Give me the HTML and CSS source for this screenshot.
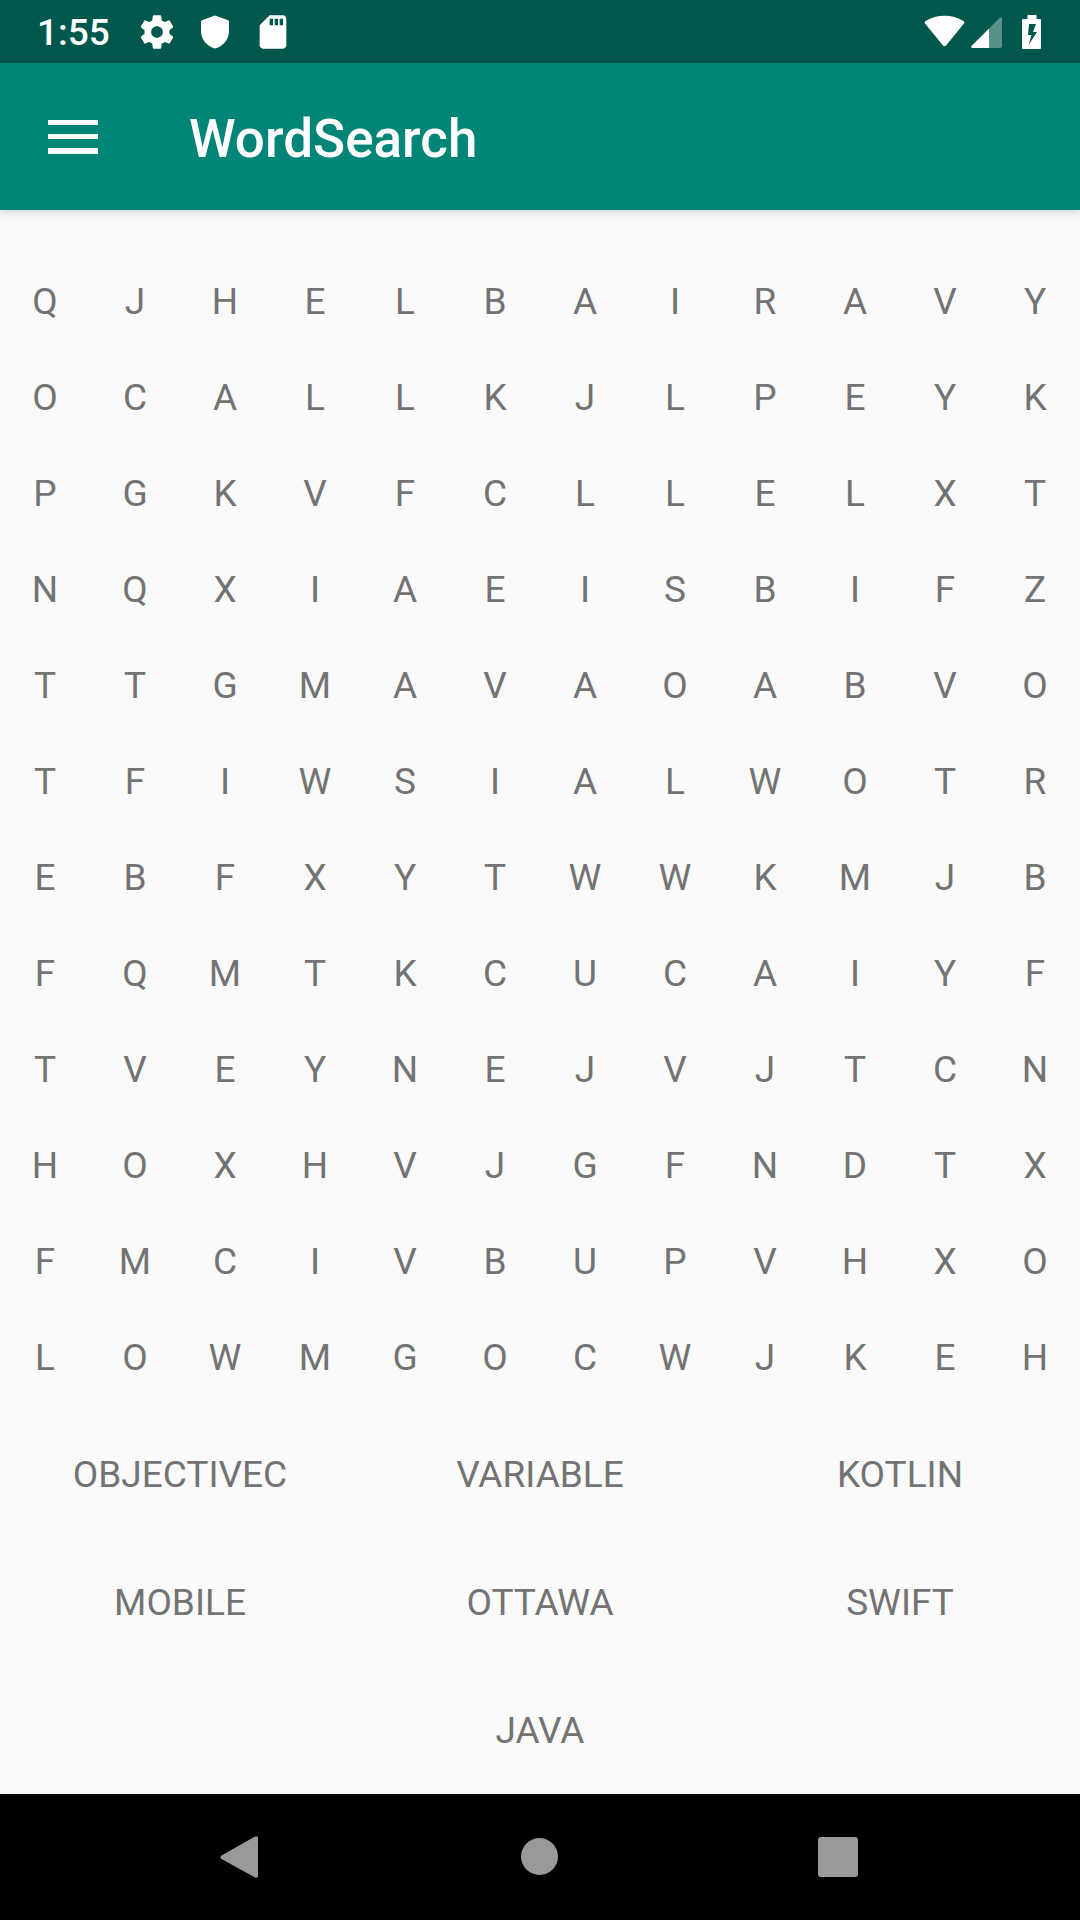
FILE: index.html
```html
<!DOCTYPE html>
<html lang="en">
<head>
<meta charset="utf-8">
<meta name="viewport" content="width=device-width, initial-scale=1">
<title>WordSearch</title>
<link rel="stylesheet" href="styles.css">
</head>
<body>
<div class="status-bar">
  <span class="clock">1:55</span>
  <div class="notifications">
    <svg class="status-icon" viewBox="0 0 24 24" aria-hidden="true"><path fill-rule="evenodd" d="M19.43 12.98c.04-.32.07-.64.07-.98s-.03-.66-.07-.98l2.11-1.65c.19-.15.24-.42.12-.64l-2-3.46c-.12-.22-.39-.3-.61-.22l-2.49 1c-.52-.4-1.08-.73-1.69-.98l-.38-2.65C14.46 2.18 14.25 2 14 2h-4c-.25 0-.46.18-.49.42l-.38 2.65c-.61.25-1.17.59-1.69.98l-2.49-1c-.23-.09-.49 0-.61.22l-2 3.46c-.13.22-.07.49.12.64l2.11 1.65c-.04.32-.07.65-.07.98s.03.66.07.98l-2.11 1.65c-.19.15-.24.42-.12.64l2 3.46c.12.22.39.3.61.22l2.49-1c.52.4 1.08.73 1.69.98l.38 2.65c.03.24.24.42.49.42h4c.25 0 .46-.18.49-.42l.38-2.65c.61-.25 1.17-.59 1.69-.98l2.49 1c.23.09.49 0 .61-.22l2-3.46c.12-.22.07-.49-.12-.64l-2.11-1.65zM12 15.5c-1.93 0-3.5-1.57-3.5-3.5s1.57-3.5 3.5-3.5 3.5 1.57 3.5 3.5-1.57 3.5-3.5 3.5z"/></svg>
    <svg class="status-icon" viewBox="0 0 40 40" aria-hidden="true"><path d="M20 3.5 32.5 8Q34 8.600 34 10V19C34 27.500 28.500 34 20 36.500 11.500 34 6 27.500 6 19V10Q6 8.600 7.500 8Z"/></svg>
    <svg class="status-icon" viewBox="0 0 24 24" aria-hidden="true"><path fill-rule="evenodd" d="M18 2h-8L4.020 8 4 20c0 1.100.9 2 2 2h12c1.100 0 2-.9 2-2V4c0-1.100-.9-2-2-2zm-6 6h-2V4h2v4zm3 0h-2V4h2v4zm3 0h-2V4h2v4z"/></svg>
  </div>
  <div class="system">
    <svg class="wifi" viewBox="0 0 42 34" aria-hidden="true"><path d="M1 8.500Q0 7 1.500 6C13 -1 28 -1 39.500 6Q41 7 40 8.500L22 30.500Q20.500 32 19 30.500Z"/></svg>
    <svg class="signal" viewBox="0 0 32 34" aria-hidden="true"><path class="dim" d="M18 13.500 28.500 3Q31 1 31 4V31Q31 33 29 33H18Z"/><path d="M18 13.500V33H1.500Q-.5 32.500.5 31Z"/></svg>
    <svg class="battery" viewBox="0 0 20 34" aria-hidden="true"><path fill-rule="evenodd" d="M5.500 0H14.500V4H18Q19 4 19 5V33Q19 34 18 34H1Q0 34 0 33V5Q0 4 1 4H5.500ZM7 9 6 20H9.500L6.500 30 15 17H11L14 9Z"/></svg>
  </div>
</div>
<header class="app-bar">
  <button class="menu-button" type="button" aria-label="Open menu">
    <svg class="menu-icon" viewBox="0 0 50 34" aria-hidden="true"><path d="M0 0H50V5H0ZM0 14H50V19H0ZM0 28H50V34H0Z"/></svg>
  </button>
  <h1 class="title">WordSearch</h1>
</header>
<main class="game">
  <table class="letters">
    <tbody>
      <tr><td>Q</td><td>J</td><td>H</td><td>E</td><td>L</td><td>B</td><td>A</td><td>I</td><td>R</td><td>A</td><td>V</td><td>Y</td></tr>
      <tr><td>O</td><td>C</td><td>A</td><td>L</td><td>L</td><td>K</td><td>J</td><td>L</td><td>P</td><td>E</td><td>Y</td><td>K</td></tr>
      <tr><td>P</td><td>G</td><td>K</td><td>V</td><td>F</td><td>C</td><td>L</td><td>L</td><td>E</td><td>L</td><td>X</td><td>T</td></tr>
      <tr><td>N</td><td>Q</td><td>X</td><td>I</td><td>A</td><td>E</td><td>I</td><td>S</td><td>B</td><td>I</td><td>F</td><td>Z</td></tr>
      <tr><td>T</td><td>T</td><td>G</td><td>M</td><td>A</td><td>V</td><td>A</td><td>O</td><td>A</td><td>B</td><td>V</td><td>O</td></tr>
      <tr><td>T</td><td>F</td><td>I</td><td>W</td><td>S</td><td>I</td><td>A</td><td>L</td><td>W</td><td>O</td><td>T</td><td>R</td></tr>
      <tr><td>E</td><td>B</td><td>F</td><td>X</td><td>Y</td><td>T</td><td>W</td><td>W</td><td>K</td><td>M</td><td>J</td><td>B</td></tr>
      <tr><td>F</td><td>Q</td><td>M</td><td>T</td><td>K</td><td>C</td><td>U</td><td>C</td><td>A</td><td>I</td><td>Y</td><td>F</td></tr>
      <tr><td>T</td><td>V</td><td>E</td><td>Y</td><td>N</td><td>E</td><td>J</td><td>V</td><td>J</td><td>T</td><td>C</td><td>N</td></tr>
      <tr><td>H</td><td>O</td><td>X</td><td>H</td><td>V</td><td>J</td><td>G</td><td>F</td><td>N</td><td>D</td><td>T</td><td>X</td></tr>
      <tr><td>F</td><td>M</td><td>C</td><td>I</td><td>V</td><td>B</td><td>U</td><td>P</td><td>V</td><td>H</td><td>X</td><td>O</td></tr>
      <tr><td>L</td><td>O</td><td>W</td><td>M</td><td>G</td><td>O</td><td>C</td><td>W</td><td>J</td><td>K</td><td>E</td><td>H</td></tr>
    </tbody>
  </table>
  <ul class="words">
    <li>OBJECTIVEC</li>
    <li>VARIABLE</li>
    <li>KOTLIN</li>
    <li>MOBILE</li>
    <li>OTTAWA</li>
    <li>SWIFT</li>
    <li class="last-word">JAVA</li>
  </ul>
</main>
<nav class="nav-bar">
  <button class="nav-button" type="button" aria-label="Back"><svg class="nav-icon" viewBox="0 0 42 42" aria-hidden="true"><path d="M1.500 19.500 35 .5Q38 -.5 38 2V40Q38 42.500 35 41.500L1.500 23Q-.5 21 1.500 19.500Z"/></svg></button>
  <button class="nav-button" type="button" aria-label="Home"><svg class="nav-icon" viewBox="0 0 42 42" aria-hidden="true"><circle cx="20.500" cy="20.500" r="18.500"/></svg></button>
  <button class="nav-button" type="button" aria-label="Recent apps"><svg class="nav-icon" viewBox="0 0 42 42" aria-hidden="true"><rect x="0" y="1" width="40" height="40" rx="3"/></svg></button>
</nav>
</body>
</html>
```
FILE: styles.css
```css
* {
  box-sizing: border-box;
}

body {
  display: flex;
  flex-direction: column;
  min-height: 100vh;
  margin: 0;
  background: #fafafa;
  color: #737373;
  font: 37px/44px Roboto, sans-serif;
}

svg {
  display: block;
  fill: #fff;
}

button {
  padding: 0;
  border: 0;
  background: none;
}

.status-bar {
  display: flex;
  align-items: center;
  height: 63px;
  padding: 0 38px 0 37px;
  background: #00574b;
  color: #fff;
}

.clock {
  padding-top: 2px;
  font-weight: 500;
}

.notifications {
  display: flex;
  gap: 18px;
  margin-left: 27px;
}

.status-icon {
  width: 40px;
  height: 40px;
}

.system {
  display: flex;
  align-items: center;
  margin-left: auto;
}

.wifi {
  width: 42px;
  height: 34px;
}

.signal {
  width: 32px;
  height: 34px;
  margin: 0 19px 0 5px;
}

.dim {
  opacity: 0.35;
}

.battery {
  width: 20px;
  height: 34px;
}

.app-bar {
  display: flex;
  align-items: center;
  gap: 44px;
  height: 147px;
  background: #008577;
  color: #fff;
  box-shadow: 0 2px 8px rgba(0, 0, 0, 0.16);
}

.menu-button {
  display: grid;
  place-items: center;
  width: 145px;
  height: 145px;
}

.menu-icon {
  width: 50px;
  height: 34px;
}

.title {
  margin: 0;
  padding-top: 4px;
  font-size: 53px;
  font-weight: 500;
  line-height: 62px;
}

.game {
  display: flex;
  flex: 1;
  flex-direction: column;
  gap: 5px;
  padding-top: 43px;
}

.letters {
  width: 100%;
  table-layout: fixed;
  border-collapse: collapse;
}

.letters td {
  height: 96px;
  padding: 2px 0 0;
  text-align: center;
}

.words {
  display: grid;
  grid-template-columns: repeat(3, 1fr);
  grid-auto-rows: 128px;
  align-items: center;
  margin: 0;
  padding: 0;
  list-style: none;
  text-align: center;
}

.words li {
  padding-top: 2px;
}

.last-word {
  grid-column: 2;
}

.nav-bar {
  display: flex;
  justify-content: center;
  height: 126px;
  background: #000;
}

.nav-button {
  display: grid;
  flex: 0 1 299px;
  place-items: center;
}

.nav-icon {
  width: 42px;
  height: 42px;
  fill: #999;
}
```
